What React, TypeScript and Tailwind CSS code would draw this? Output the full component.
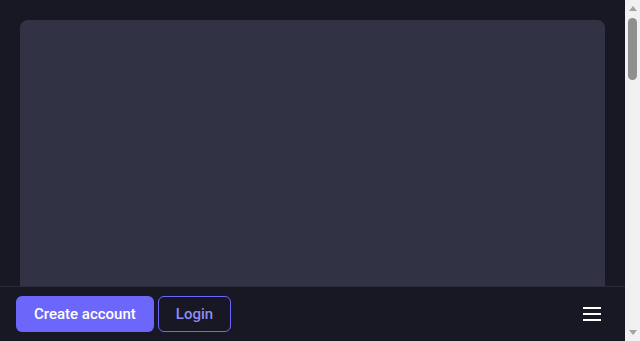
import React from "react";

const App = () => {
  return (
    <div className="flex flex-row h-screen overflow-hidden bg-[#181825] font-['Roboto',sans-serif]">
      <div className="relative flex-1 overflow-hidden">
        <div className="p-5">
          <div className="h-[1650px] rounded-lg bg-[#313244]"></div>
        </div>
        <div className="absolute bottom-0 left-0 right-0 h-[55px] bg-[#181825] border-t border-[#2a2a3c] flex flex-row items-center justify-between px-4">
          <div className="flex flex-row gap-1">
            <button className="h-9 px-[18px] rounded-md bg-[#6c67fa] text-white text-[15px] font-medium">
              Create account
            </button>
            <button className="h-9 px-[17px] rounded-md border border-[#6c67fa] text-[#8e8cf5] text-[15px] font-medium">
              Login
            </button>
          </div>
          <button className="mr-[8px] flex flex-col gap-[4px] w-[18px]">
            <span className="block h-[2px] w-full bg-white"></span>
            <span className="block h-[2px] w-full bg-white"></span>
            <span className="block h-[2px] w-full bg-white"></span>
          </button>
        </div>
      </div>
      {/* scrollbar */}
      <div className="w-[15px] bg-[#f1f1f1] flex flex-col items-center">
        <svg width="8" height="5" viewBox="0 0 8 5" className="mt-[6px]">
          <polygon points="4,0 8,5 0,5" fill="#a3a3a3" />
        </svg>
        <div className="mt-[7px] w-[9px] h-[62px] rounded-full bg-[#8f8f8f]"></div>
        <div className="flex-1"></div>
        <svg width="8" height="5" viewBox="0 0 8 5" className="mb-[6px]">
          <polygon points="0,0 8,0 4,5" fill="#a3a3a3" />
        </svg>
      </div>
    </div>
  );
};

export default App;
